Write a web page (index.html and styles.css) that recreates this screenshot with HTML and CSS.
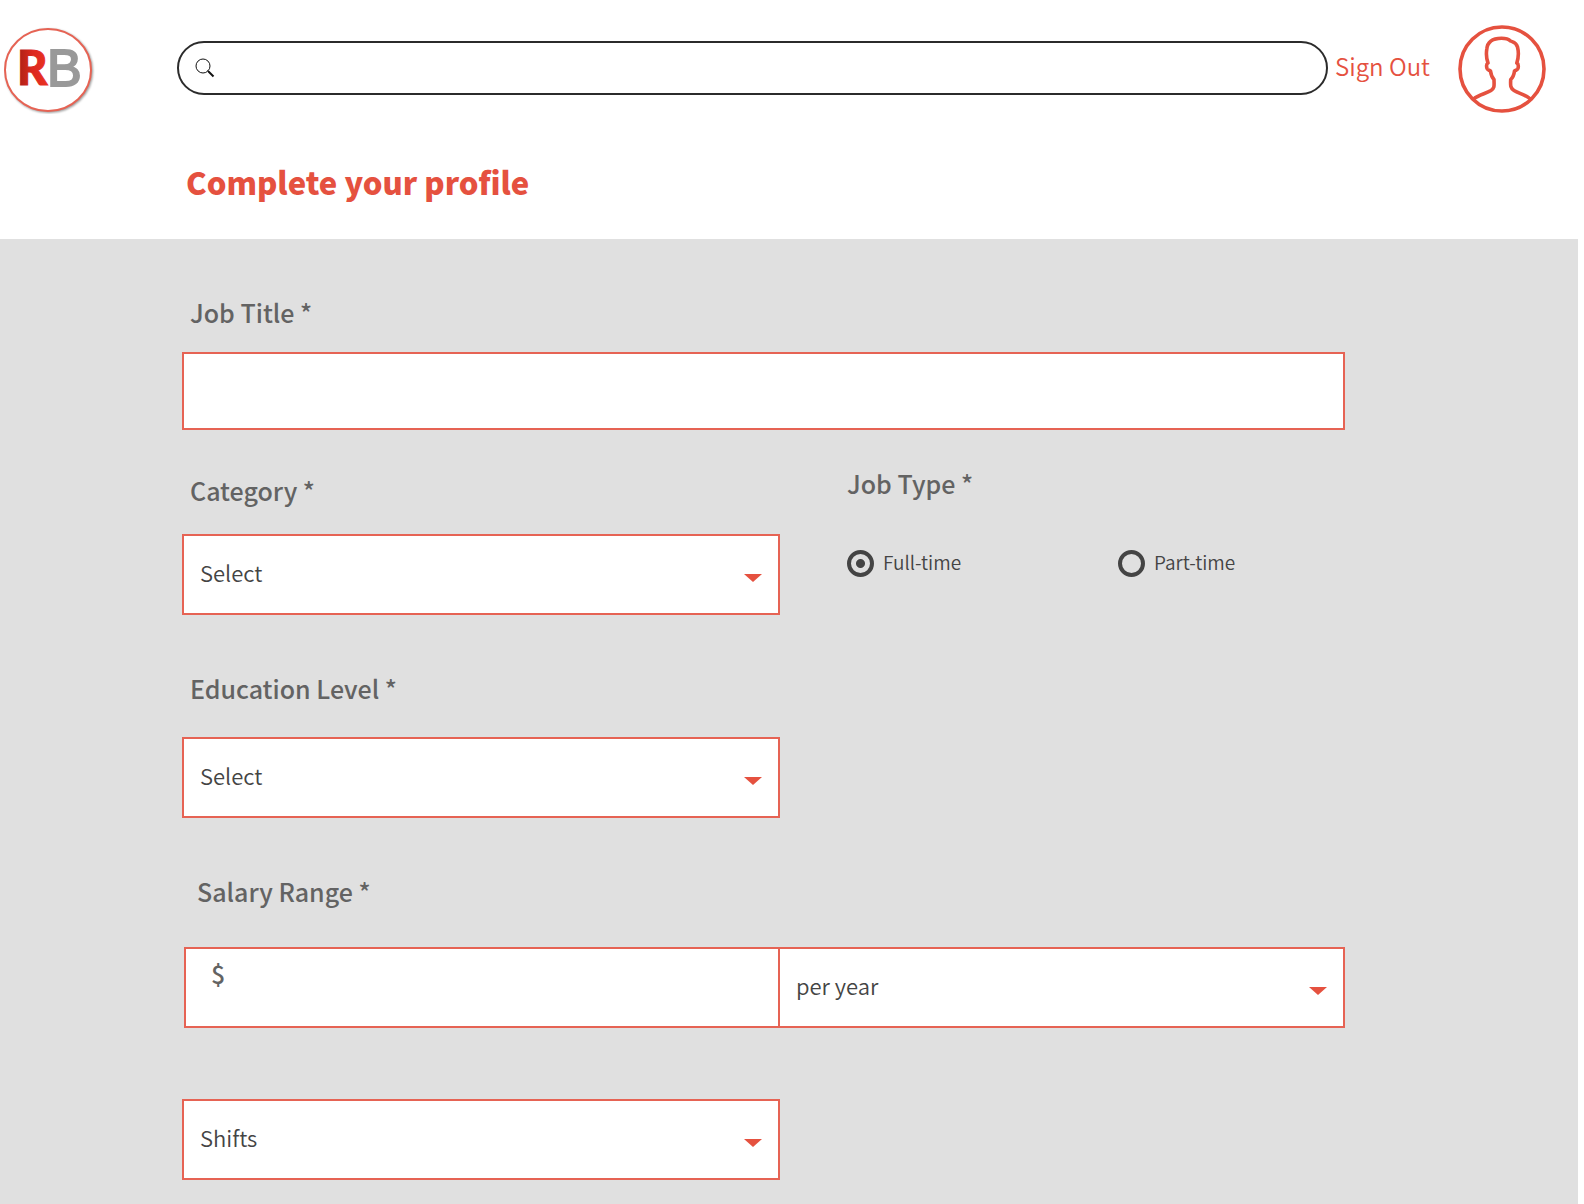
FILE: index.html
```html
<!DOCTYPE html>
<html lang="en">
<head>
<meta charset="utf-8">
<meta name="viewport" content="width=device-width, initial-scale=1">
<title>Complete your profile</title>
<link rel="stylesheet" href="styles.css">
</head>
<body>
<header class="topbar">
  <a class="logo" href="#" aria-label="RB home">
    <svg class="logo-mark" viewBox="0 0 92 90" aria-hidden="true">
      <defs>
        <linearGradient id="logo-red" x1="0" x2="1" y1="0" y2="0">
          <stop offset="0" stop-color="#a81f16"/>
          <stop offset="0.5" stop-color="#dc291e"/>
          <stop offset="1" stop-color="#ea3223"/>
        </linearGradient>
      </defs>
      <ellipse class="logo-ring" cx="44" cy="46" rx="43" ry="41"/>
      <text class="logo-r" x="13" y="61" fill="url(#logo-red)" stroke="url(#logo-red)">R</text>
      <text class="logo-b" x="43" y="62">B</text>
    </svg>
  </a>
  <form class="search" role="search">
    <svg class="search-icon" viewBox="0 0 20 20" aria-hidden="true">
      <circle cx="8" cy="8" r="7"/>
      <path class="search-neck" d="M12.500 12.500l2 2"/>
      <path class="search-handle" d="M13.500 13.500l5 5"/>
    </svg>
    <input class="search-input" type="search" aria-label="Search">
  </form>
  <a class="sign-out" href="#">Sign Out</a>
  <a class="avatar" href="#" aria-label="Your account">
    <svg class="avatar-icon" viewBox="0 0 88 88" aria-hidden="true">
      <circle cx="44" cy="44" r="42"/>
      <path d="M15.500 74C20 70 28 68.500 33 65.500C37 63 36 60 36 54.500C34 52.500 33 50 32.500 46C31 45 29.500 45 29 43.500C28.300 41 28 39 30 38C28.500 34 28.200 28 28.800 24C29.500 16 35 13.300 43.500 13.200C47 13.200 50 13.500 52.500 16C55 17.200 58 17 59.500 22C61 28 60.500 33 58.800 38C61 39 60.500 41 60 43.500C59.500 45 58 45 56.500 46C56 50 55 52.500 52.700 54.500C52.500 60 52 63 56 65.500C61 68.500 68 70 72.500 74"/>
    </svg>
  </a>
</header>

<h1 class="page-title">Complete your profile</h1>

<main class="panel">
  <form class="profile-form">
    <div class="field job-title">
      <label class="label" for="job-title">Job Title *</label>
      <input class="box box-title" id="job-title" type="text">
    </div>

    <div class="row row-category">
      <div class="field category">
        <label class="label" for="category">Category *</label>
        <div class="select">
          <select class="box" id="category"><option>Select</option></select>
          <svg class="caret" viewBox="0 0 18 9" aria-hidden="true"><path d="M0 1h18L9 9z"/></svg>
        </div>
      </div>
      <fieldset class="job-type">
        <legend class="label">Job Type *</legend>
        <div class="options">
          <label class="option"><input class="radio" type="radio" name="job-type" checked><span class="option-text">Full-time</span></label>
          <label class="option"><input class="radio" type="radio" name="job-type"><span class="option-text">Part-time</span></label>
        </div>
      </fieldset>
    </div>

    <div class="row">
      <div class="field education">
        <label class="label" for="education">Education Level *</label>
        <div class="select">
          <select class="box" id="education"><option>Select</option></select>
          <svg class="caret" viewBox="0 0 18 9" aria-hidden="true"><path d="M0 1h18L9 9z"/></svg>
        </div>
      </div>
    </div>

    <div class="field salary">
      <label class="label label-salary" for="salary">Salary Range *</label>
      <div class="salary-row">
        <div class="box money">
          <span class="currency">$</span>
          <input class="money-input" id="salary" type="text">
        </div>
        <div class="select">
          <select class="box" aria-label="Salary period"><option>per year</option></select>
          <svg class="caret" viewBox="0 0 18 9" aria-hidden="true"><path d="M0 1h18L9 9z"/></svg>
        </div>
      </div>
    </div>

    <div class="row row-shifts">
      <div class="select">
        <select class="box" aria-label="Shifts"><option>Shifts</option></select>
        <svg class="caret" viewBox="0 0 18 9" aria-hidden="true"><path d="M0 1h18L9 9z"/></svg>
      </div>
    </div>
  </form>
</main>
</body>
</html>
```
FILE: styles.css
```css
:root {
  --red: #e5513f;
  --border: #e66354;
  --grey: #e0e0e0;
  --label: #636363;
  --ink: #444;
}

* { box-sizing: border-box; }

body {
  margin: 0;
  min-height: 100vh;
  display: flex;
  flex-direction: column;
  background: #fff;
  color: var(--ink);
  font-family: "Noto Sans CJK SC", "Noto Sans", sans-serif;
}

input, select { font: inherit; color: inherit; }

.topbar {
  display: flex;
  align-items: center;
  padding: 24px 38px 0 4px;
}

.logo { margin-right: 81px; }
.logo-mark { display: block; width: 92px; height: 90px; }
.logo-ring {
  fill: #fff;
  stroke: var(--border);
  stroke-width: 2;
  filter: drop-shadow(1px 1px 1px rgba(0, 0, 0, 0.4));
}
.logo-r { font: 900 47px Lato, sans-serif; stroke-width: 1; }
.logo-b { font: 52px "Liberation Sans", sans-serif; fill: #999; stroke: #999; stroke-width: 2; }

.search {
  flex: 1;
  display: flex;
  align-items: center;
  height: 54px;
  margin-bottom: 2px;
  padding-left: 16px;
  border: 2px solid #2b2b2b;
  border-radius: 27px;
}
.search-icon { width: 20px; height: 20px; fill: none; stroke: #111; }
.search-neck { stroke-width: 1; }
.search-handle { stroke-width: 2; }
.search-input {
  flex: 1;
  min-width: 0;
  height: 40px;
  margin: 0 24px 0 8px;
  border: 0;
  outline: 0;
  background: none;
  font-size: 20px;
}

.sign-out {
  margin: 0 28px 6px 7px;
  color: var(--red);
  font-size: 24px;
  font-weight: 350;
  line-height: 36px;
  text-decoration: none;
}
.avatar-icon {
  display: block;
  width: 88px;
  height: 88px;
  fill: none;
  stroke: var(--red);
  stroke-width: 3.6;
  stroke-linejoin: round;
}

.page-title {
  margin: 0;
  padding: 48px 40px 37px 186px;
  color: var(--red);
  font-size: 31px;
  font-weight: 900;
  line-height: 40px;
}

.panel {
  flex: 1;
  margin-right: 6px;
  padding: 55px 233px 24px 182px;
  background: var(--grey);
}
.profile-form { display: flex; flex-direction: column; }

.label {
  padding: 0 0 0 8px;
  color: var(--label);
  font-size: 25px;
  font-weight: 500;
  line-height: 36px;
}
.label-salary { padding-left: 15px; }

.field { display: flex; flex-direction: column; }
.job-title { gap: 22px; }
.category { gap: 26px; padding-top: 7px; }
.education { gap: 31px; }
.salary { gap: 38px; margin-top: 55px; }

.row { display: grid; grid-template-columns: 598fr 565fr; margin-top: 55px; }
.row-category { margin-top: 35px; }
.row-shifts { margin-top: 71px; }

.box {
  width: 100%;
  height: 81px;
  margin: 0;
  padding: 0 16px 6px;
  appearance: none;
  border: 2px solid var(--border);
  border-radius: 0;
  background: #fff;
  font-size: 22px;
  font-weight: 350;
}
.box-title { height: 78px; }

.select { display: grid; align-items: center; }
.select > * { grid-area: 1 / 1; }
.caret {
  justify-self: end;
  width: 18px;
  height: 9px;
  margin: 6px 18px 0 0;
  fill: var(--red);
  pointer-events: none;
}

.job-type { min-width: 0; margin: 0; padding: 0 0 0 67px; border: 0; }
.job-type .label { padding: 0; }
.options { display: grid; grid-template-columns: 271fr 227fr; margin-top: 46px; }
.option {
  display: flex;
  align-items: center;
  gap: 9px;
  font-size: 19px;
  font-weight: 350;
  line-height: 30px;
}
.option-text { padding-bottom: 2px; }
.radio {
  width: 27px;
  height: 27px;
  margin: 0;
  appearance: none;
  border: 4px solid var(--ink);
  border-radius: 50%;
}
.radio:checked { background: radial-gradient(circle, var(--ink) 4px, transparent 5px); }

.salary-row { display: grid; grid-template-columns: 598fr 567fr; margin-left: 2px; }
.salary-row .select { margin-left: -2px; }
.money { display: flex; align-items: flex-start; padding: 6px 16px 0 25px; }
.currency { color: var(--label); font-size: 25px; font-weight: 500; line-height: 36px; }
.money-input {
  flex: 1;
  min-width: 0;
  height: 60px;
  margin-left: 8px;
  padding: 0;
  border: 0;
  outline: 0;
  background: none;
}
```
